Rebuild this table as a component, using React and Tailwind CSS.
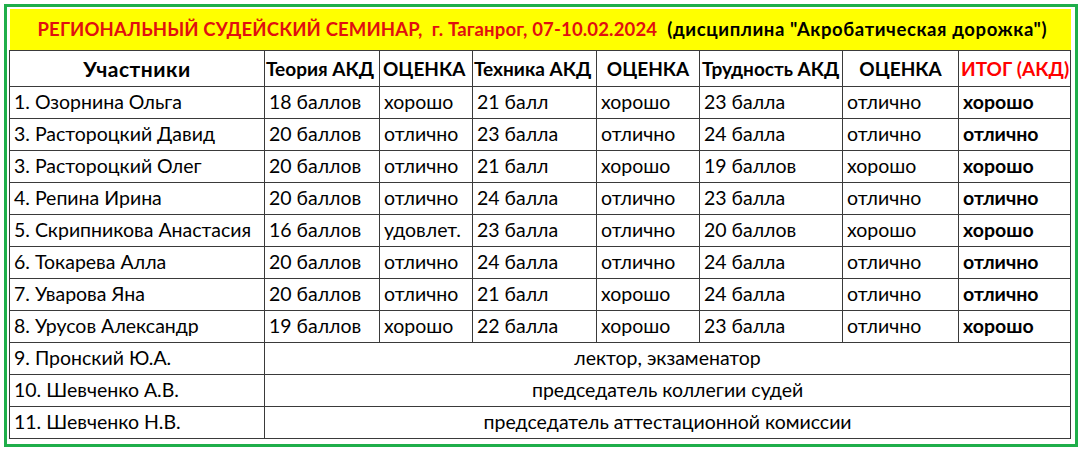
import React from "react";

const rows = [
  ["1. Озорнина Ольга", "18 баллов", "хорошо", "21 балл", "хорошо", "23 балла", "отлично", "хорошо"],
  ["3. Растороцкий Давид", "20 баллов", "отлично", "23 балла", "отлично", "24 балла", "отлично", "отлично"],
  ["3. Растороцкий Олег", "20 баллов", "отлично", "21 балл", "хорошо", "19 баллов", "хорошо", "хорошо"],
  ["4. Репина Ирина", "20 баллов", "отлично", "24 балла", "отлично", "23 балла", "отлично", "отлично"],
  ["5. Скрипникова Анастасия", "16 баллов", "удовлет.", "23 балла", "отлично", "20 баллов", "хорошо", "хорошо"],
  ["6. Токарева Алла", "20 баллов", "отлично", "24 балла", "отлично", "24 балла", "отлично", "отлично"],
  ["7. Уварова Яна", "20 баллов", "отлично", "21 балл", "хорошо", "24 балла", "отлично", "отлично"],
  ["8. Урусов Александр", "19 баллов", "хорошо", "22 балла", "хорошо", "23 балла", "отлично", "хорошо"],
];

const staff = [
  ["9. Пронский Ю.А.", "лектор, экзаменатор"],
  ["10. Шевченко А.В.", "председатель коллегии судей"],
  ["11. Шевченко Н.В.", "председатель аттестационной комиссии"],
];

const widths = [255, 115, 93, 124, 103, 143, 116, 112];

export default function App() {
  const cell = "border border-[#3a3a3a] px-[4px] h-[32px] text-left align-middle";
  return (
    <div
      className="w-[1084px] h-[456px] bg-white pt-[4px] pl-[4px]"
      style={{ fontFamily: "Lato, 'Open Sans', sans-serif" }}
    >
      <div className="w-[1074px] h-[443px] border-[3px] border-[#1fae4a] p-[2px]">
        <table className="border-collapse table-fixed w-[1061px] text-[19.5px] leading-none text-black">
          <colgroup>
            {widths.map((w, i) => (
              <col key={i} style={{ width: w }} />
            ))}
          </colgroup>
          <tbody>
            <tr>
              <td colSpan={8} className="bg-[#ffff00] h-[41px] border-b border-[#3a3a3a] pl-[28px] font-bold text-[18.5px] whitespace-nowrap">
                <span className="text-[#e01010] tracking-[0.15px]">РЕГИОНАЛЬНЫЙ СУДЕЙСКИЙ СЕМИНАР,&nbsp; г. Таганрог, 07-10.02.2024</span>
                <span className="text-black tracking-[0.6px]">&nbsp; (дисциплина "Акробатическая дорожка")</span>
              </td>
            </tr>
            <tr className="font-bold text-[19px]">
              <td className="border border-[#3a3a3a] h-[36px] text-center text-[21px] tracking-[0.5px]">Участники</td>
              <td className="border border-[#3a3a3a] px-[1px] whitespace-nowrap">Теория АКД</td>
              <td className="border border-[#3a3a3a] px-[3px] whitespace-nowrap">ОЦЕНКА</td>
              <td className="border border-[#3a3a3a] px-[1px] whitespace-nowrap">Техника АКД</td>
              <td className="border border-[#3a3a3a] text-center whitespace-nowrap">ОЦЕНКА</td>
              <td className="border border-[#3a3a3a] px-[2px] whitespace-nowrap">Трудность АКД</td>
              <td className="border border-[#3a3a3a] text-center whitespace-nowrap">ОЦЕНКА</td>
              <td className="border border-[#3a3a3a] px-[2px] text-[#ff0000] whitespace-nowrap">ИТОГ (АКД)</td>
            </tr>
            {rows.map((r, i) => (
              <tr key={i}>
                {r.map((c, j) => (
                  <td key={j} className={`${cell} whitespace-nowrap ${j === 7 ? "font-bold" : ""}`}>
                    {c}
                  </td>
                ))}
              </tr>
            ))}
            {staff.map((s, i) => (
              <tr key={i}>
                <td className={`${cell} whitespace-nowrap`}>{s[0]}</td>
                <td colSpan={7} className="border border-[#3a3a3a] h-[32px] text-center whitespace-nowrap">
                  {s[1]}
                </td>
              </tr>
            ))}
          </tbody>
        </table>
      </div>
    </div>
  );
}
